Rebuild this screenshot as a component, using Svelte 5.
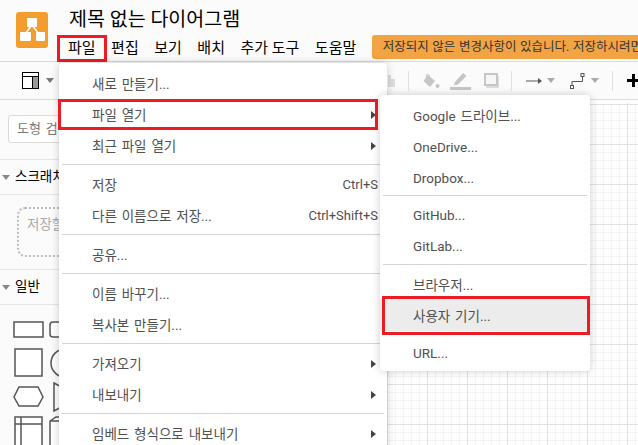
<script>
	const fileMenu = [
		{ label: '새로 만들기...' },
		{ label: '파일 열기', arrow: true, marked: true },
		{ label: '최근 파일 열기', arrow: true },
		null,
		{ label: '저장', key: 'Ctrl+S' },
		{ label: '다른 이름으로 저장...', key: 'Ctrl+Shift+S' },
		null,
		{ label: '공유...' },
		null,
		{ label: '이름 바꾸기...' },
		{ label: '복사본 만들기...' },
		null,
		{ label: '가져오기', arrow: true },
		{ label: '내보내기', arrow: true },
		null,
		{ label: '임베드 형식으로 내보내기', arrow: true }
	];
	const openMenu = [
		{ label: 'Google 드라이브...' },
		{ label: 'OneDrive...' },
		{ label: 'Dropbox...' },
		null,
		{ label: 'GitHub...' },
		{ label: 'GitLab...' },
		null,
		{ label: '브라우저...' },
		{ label: '사용자 기기...', marked: true },
		null,
		{ label: 'URL...' }
	];
	const menubar = ['파일', '편집', '보기', '배치', '추가 도구', '도움말'];
</script>

<div class="app">
	<header>
		<div class="logo">
			<svg width="32" height="36" viewBox="0 0 32 36">
				<path d="M16 13 L9 22 M16 13 L23 22" stroke="#fff" stroke-width="1.5" fill="none" />
				<rect x="11" y="6" width="10" height="9" rx="1" fill="#fff" />
				<rect x="4" y="20" width="11" height="9" rx="1" fill="#fff" />
				<rect x="20" y="20" width="9" height="9" rx="1" fill="#fff" />
			</svg>
		</div>
		<div class="titles">
			<div class="title">제목 없는 다이어그램</div>
			<div class="menubar">
				{#each menubar as item, i}
					<span class="top-item" class:marked={i === 0}>{item}</span>
				{/each}
				<span class="banner">저장되지 않은 변경사항이 있습니다. 저장하시려면 여기를 클릭하세요.</span>
			</div>
		</div>
	</header>

	<div class="toolbar">
		<svg class="panel-icon" width="18" height="18" viewBox="0 0 18 18">
			<rect x="0.5" y="0.5" width="16" height="16" fill="#fff" stroke="#000" />
			<rect x="11" y="5" width="5" height="11" fill="#999" />
			<path d="M1 4.5H16M10.5 4.5V16" stroke="#000" fill="none" />
		</svg>
		<span class="caret"></span>
		<span class="tool-spacer"></span>
		<svg class="piece" width="8" height="12" viewBox="0 0 8 12"><path d="M0 0H3V4H7V12H0Z" fill="#ddd" /></svg>
		<span class="sep"></span>
		<div class="group">
			<svg width="17" height="16" viewBox="0 0 17 16">
				<path d="M5 2 L12 8 L7 14 L0.5 8 Z" fill="#c6c6c6" />
				<path d="M3 5 L4 1 L7 3" stroke="#c6c6c6" fill="none" />
				<circle cx="14.5" cy="13" r="2" fill="#c6c6c6" />
			</svg>
			<svg width="23" height="18" viewBox="0 0 23 18">
				<path d="M5 10 L13 1 L16.5 4 L8 12.5 L4 13.5 Z" fill="#c6c6c6" />
				<rect x="0" y="15" width="21" height="3" fill="#c6c6c6" />
			</svg>
			<svg width="17" height="16" viewBox="0 0 17 16">
				<rect x="3" y="3" width="13" height="12" fill="#ddd" />
				<rect x="2" y="1" width="12" height="11" fill="#f7f7f7" stroke="#c6c6c6" stroke-width="2" />
			</svg>
		</div>
		<span class="sep"></span>
		<svg width="16" height="8" viewBox="0 0 16 8">
			<path d="M0 4H13" stroke="#555" />
			<path d="M12 1 L16 4 L12 7Z" fill="#555" />
		</svg>
		<span class="caret light"></span>
		<svg width="15" height="16" viewBox="0 0 15 16">
			<path d="M2 14V8.5H12.5V2" stroke="#555" fill="none" />
			<rect x="0.5" y="12.5" width="3" height="3" fill="#fff" stroke="#555" />
			<rect x="11" y="0.5" width="3" height="3" fill="#fff" stroke="#555" />
		</svg>
		<span class="caret light last"></span>
		<span class="sep"></span>
		<span class="plus"></span>
	</div>

	<div class="workspace">
		<aside>
			<div class="search">도형 검색</div>
			<div class="section">스크래치패드</div>
			<div class="scratch"><div class="dropbox">저장할 항목을</div></div>
			<div class="section">일반</div>
			<svg class="shapes" width="187" height="141" viewBox="0 0 187 141">
				<g fill="#fff" stroke="#555" stroke-width="1.5">
					<rect x="14" y="17" width="29" height="15" />
					<rect x="50" y="17" width="29" height="15" rx="3" />
					<rect x="15" y="44" width="27" height="27" />
					<circle cx="65" cy="58" r="14" />
					<path d="M19 82H38L43 92L38 101H19L14 92Z" />
					<path d="M54 78L80 92L54 106Z" />
					<rect x="15" y="112" width="27" height="30" />
					<path d="M15 119H42M21 112V142" />
					<path d="M50 116L56 112H80V136L74 142H50ZM50 116H74V142M74 116L80 112" />
				</g>
			</svg>
		</aside>
		<div class="canvas"></div>
	</div>

	<div class="menu file-menu">
		{#each fileMenu as item}
			{#if item}
				<div class="row" class:marked={item.marked}>
					<span>{item.label}</span>
					{#if item.key}<span class="key">{item.key}</span>{/if}
					{#if item.arrow}<span class="arrow"></span>{/if}
				</div>
			{:else}
				<hr />
			{/if}
		{/each}
	</div>

	<div class="menu open-menu">
		{#each openMenu as item}
			{#if item}
				<div class="row" class:marked={item.marked}>
					<span>{item.label}</span>
				</div>
			{:else}
				<hr />
			{/if}
		{/each}
	</div>
</div>

<style>
	:global(body) {
		margin: 0;
	}

	.app {
		position: relative;
		width: 638px;
		height: 445px;
		overflow: hidden;
		background: #fff;
		font-family: Roboto, "Noto Sans CJK KR", sans-serif;
		font-size: 13.5px;
		word-spacing: 1.5px;
		color: #000;
		display: flex;
		flex-direction: column;
	}

	header {
		height: 62px;
		box-sizing: border-box;
		background: #fbfbfb;
		border-bottom: 1px solid #dadada;
		display: flex;
		flex: none;
		padding: 12px 0 0 16px;
	}

	.logo {
		width: 32px;
		height: 36px;
		background: #f29d2e;
		border-radius: 3px;
		flex: none;
	}

	.titles {
		margin-left: 20px;
		min-width: 0;
		flex: 1;
	}

	.title {
		font-size: 19.5px;
		line-height: 22px;
		margin: -3px 0 0 1px;
		word-spacing: 0;
	}

	.menubar {
		display: flex;
		align-items: center;
		margin-top: 4px;
		white-space: nowrap;
		height: 24px;
		font-size: 15px;
		word-spacing: 0;
	}

	.top-item {
		margin-right: 15.5px;
		line-height: 26px;
		height: 24px;
		flex: none;
		position: relative;
	}

	.top-item.marked::after {
		content: "";
		position: absolute;
		left: -11px;
		right: -11px;
		top: 0;
		bottom: -3px;
		border: 3px solid #ed1c24;
	}

	.banner {
		background: #f2a444;
		color: #333;
		border-radius: 3px;
		height: 24px;
		line-height: 24px;
		padding: 0 11px;
		font-size: 12.5px;
		word-spacing: 0.5px;
		flex: none;
	}

	.toolbar {
		height: 38px;
		box-sizing: border-box;
		flex: none;
		border-bottom: 1px solid #dadada;
		background: #fbfbfb;
		display: flex;
		align-items: center;
		padding-left: 22px;
	}

	.toolbar svg {
		flex: none;
	}

	.caret {
		width: 0;
		height: 0;
		flex: none;
		border: 4px solid transparent;
		border-top: 5px solid #777;
		border-bottom: 0;
		margin-left: 6px;
	}

	.caret.light {
		border-top-color: #aaa;
		margin-left: 5px;
		margin-right: 15px;
	}

	.caret.light.last {
		margin-left: 6px;
		margin-right: 13px;
	}

	.tool-spacer {
		width: 334px;
		flex: none;
	}

	.piece {
		margin-right: 12px;
	}

	.group {
		display: flex;
		align-items: center;
		gap: 10px;
		flex: none;
		margin-right: 11px;
	}

	.sep {
		width: 1px;
		height: 20px;
		background: #e0e0e0;
		margin-right: 14px;
		flex: none;
	}

	.plus {
		width: 13px;
		height: 13px;
		flex: none;
		background:
			linear-gradient(#000, #000) center / 13px 3px no-repeat,
			linear-gradient(#000, #000) center / 3px 13px no-repeat;
	}

	.workspace {
		flex: 1;
		display: flex;
		min-height: 0;
	}

	aside {
		width: 190px;
		flex: none;
		background: #fbfbfb;
	}

	.search {
		margin: 15px 0 16px 8px;
		height: 28px;
		box-sizing: border-box;
		border: 1px solid #dadada;
		border-radius: 3px;
		background: #fff;
		color: #777;
		font-size: 13px;
		line-height: 26px;
		padding-left: 8px;
	}

	.section {
		height: 36px;
		box-sizing: border-box;
		line-height: 33px;
		padding-left: 15px;
		border-top: 1px solid #e5e5e5;
		border-bottom: 1px solid #e5e5e5;
		position: relative;
		word-spacing: 0;
	}

	.section::before {
		content: "";
		position: absolute;
		left: 2px;
		top: 15px;
		border: 4px solid transparent;
		border-top: 5px solid #888;
		border-bottom: 0;
	}

	.scratch {
		padding: 12px 0 0 17px;
		height: 74px;
		box-sizing: border-box;
	}

	.dropbox {
		height: 50px;
		box-sizing: border-box;
		border: 2px dotted #bbb;
		border-radius: 8px;
		color: #aaa;
		padding: 4px 8px;
	}

	.shapes {
		display: block;
	}

	.canvas {
		flex: 1;
		margin-top: 3px;
		background-color: #fff;
		background-image:
			linear-gradient(#e2e2e2 1px, transparent 1px),
			linear-gradient(90deg, #e2e2e2 1px, transparent 1px),
			linear-gradient(#f4f4f4 1px, transparent 1px),
			linear-gradient(90deg, #f4f4f4 1px, transparent 1px);
		background-size: 40px 40px, 40px 40px, 8px 8px, 8px 8px;
		background-position: 0 1px, 37px 0, 0 1px, 37px 0;
	}

	.menu {
		position: absolute;
		background: #fff;
		box-shadow: 0 0 8px rgba(0, 0, 0, 0.2);
		border-radius: 4px;
		color: #505050;
		padding: 5px 0 3px;
	}

	.file-menu {
		left: 59px;
		top: 63px;
		width: 328px;
	}

	.open-menu {
		left: 380px;
		top: 95px;
		width: 210px;
	}

	.row {
		height: 31px;
		line-height: 30px;
		box-sizing: border-box;
		padding: 0 9px 0 33px;
		display: flex;
		justify-content: space-between;
		align-items: center;
		position: relative;
		white-space: nowrap;
	}

	.row.marked::after {
		content: "";
		position: absolute;
		border: 3px solid #ed1c24;
	}

	.file-menu .row.marked::after {
		left: -1px;
		right: 9px;
		top: 0;
		bottom: 0;
	}

	.open-menu .row.marked {
		background: #ececec;
		box-shadow: 0 -1px 0 #ececec;
	}

	.open-menu .row.marked::after {
		left: 2px;
		right: 0;
		top: -4px;
		bottom: -4px;
	}

	.key {
		font-size: 13px;
		word-spacing: 0;
	}

	.arrow {
		position: absolute;
		right: 11px;
		top: 12px;
		border: 4px solid transparent;
		border-left: 5px solid #444;
		border-right: 0;
	}

	hr {
		border: 0;
		border-top: 1px solid #d4d4d4;
		margin: 3px 3px 4px;
	}

	.open-menu hr {
		margin: 2px 3px 3px;
	}

	.open-menu hr:nth-of-type(2) {
		margin: 3px 3px 4px;
	}
</style>
